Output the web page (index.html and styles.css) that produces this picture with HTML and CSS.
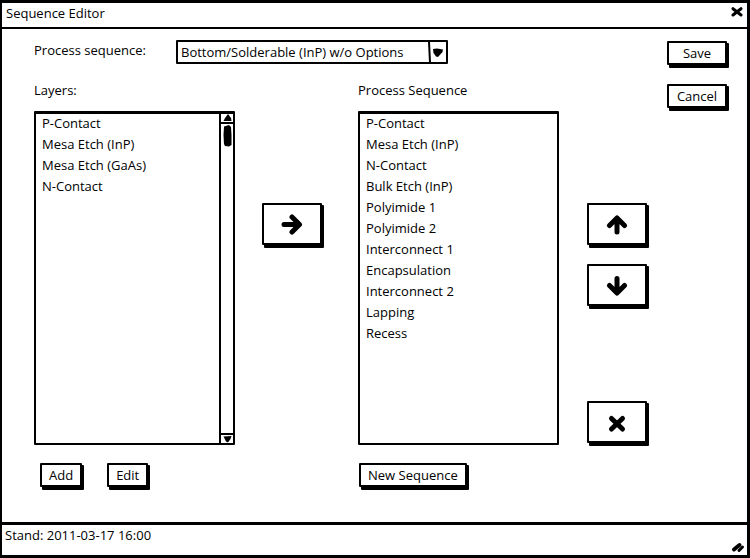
FILE: index.html
```html
<!DOCTYPE html>
<html lang="en">
<head>
<meta charset="utf-8">
<title>Sequence Editor</title>
<link rel="stylesheet" href="styles.css">
</head>
<body>
<div class="window">
  <header class="titlebar">
    <h1 class="title">Sequence Editor</h1>
    <button class="close" type="button" aria-label="Close">
      <svg width="12" height="10" viewBox="0 0 12 10"><path d="M2 1.700 10 8M10 1.700 2 8" fill="none" stroke="#000" stroke-width="3" stroke-linecap="round"/></svg>
    </button>
  </header>

  <main class="editor">
    <div class="process">
      <label class="process-label" for="process">Process sequence:</label>
      <div class="dropdown">
        <select id="process" class="dropdown-select"><option>Bottom/Solderable (InP) w/o Options</option></select>
        <svg class="dropdown-arrow" width="18" height="20" viewBox="0 0 18 20"><path d="M1 0 2 20" stroke="#000" stroke-width="2"/><path d="M5 7 9 6.500 15 7.500 14.500 10 10 15 8 14.500 5.500 11Z"/></svg>
      </div>
    </div>

    <div class="actions">
      <button class="btn" type="button">Save</button>
      <button class="btn" type="button">Cancel</button>
    </div>

    <label class="heading heading-layers" for="layers">Layers:</label>
    <label class="heading heading-sequence" for="sequence">Process Sequence</label>

    <div class="listbox list-layers">
      <select id="layers" class="list" size="4">
        <option>P-Contact</option>
        <option>Mesa Etch (InP)</option>
        <option>Mesa Etch (GaAs)</option>
        <option>N-Contact</option>
      </select>
      <div class="scroll">
        <svg class="scroll-up" width="11" height="8" viewBox="0 0 11 8"><path d="M1.500 7 3 4 6 0 9 4 9.500 7Z"/></svg>
        <svg class="scroll-thumb" width="11" height="22" viewBox="0 0 11 22"><path d="M2 1.500 7 0 9 2 9.500 10 9.500 20 7 21.500 3 21 2 19 1.500 10Z"/></svg>
        <svg class="scroll-down" width="11" height="8" viewBox="0 0 11 8"><path d="M1.500 1.500 9.500 1 8.500 4 6 7.500 4 6.500Z"/></svg>
      </div>
    </div>

    <div class="transfer">
      <button class="btn btn-icon" type="button" aria-label="Add to sequence">
        <svg width="22" height="22" viewBox="0 0 22 22"><path d="M3 11.500H18M11 4 18.500 11.500 11 19" class="stroke"/></svg>
      </button>
    </div>

    <div class="listbox list-sequence">
      <select id="sequence" class="list" size="11">
        <option>P-Contact</option>
        <option>Mesa Etch (InP)</option>
        <option>N-Contact</option>
        <option>Bulk Etch (InP)</option>
        <option>Polyimide 1</option>
        <option>Polyimide 2</option>
        <option>Interconnect 1</option>
        <option>Encapsulation</option>
        <option>Interconnect 2</option>
        <option>Lapping</option>
        <option>Recess</option>
      </select>
    </div>

    <div class="order">
      <button class="btn btn-icon" type="button" aria-label="Move up">
        <svg width="22" height="22" viewBox="0 0 22 22"><path d="M11 19V5M3.500 12.500 11 5 18.500 12.500" class="stroke"/></svg>
      </button>
      <button class="btn btn-icon" type="button" aria-label="Move down">
        <svg width="22" height="22" viewBox="0 0 22 22"><path d="M11 4.500V18.500M3.500 11.500 11 19 18.500 11.500" class="stroke"/></svg>
      </button>
      <button class="btn btn-icon btn-remove" type="button" aria-label="Remove">
        <svg width="22" height="22" viewBox="0 0 22 22"><path d="M5.500 7.500 16.500 18M16.500 7.500 5.500 18" class="stroke"/></svg>
      </button>
    </div>

    <div class="layer-tools">
      <button class="btn" type="button">Add</button>
      <button class="btn" type="button">Edit</button>
    </div>
    <div class="sequence-tools">
      <button class="btn" type="button">New Sequence</button>
    </div>
  </main>

  <footer class="status">
    <span>Stand: 2011-03-17 16:00</span>
    <svg class="grip" width="14" height="12" viewBox="0 0 14 12"><path d="M3 8.500 8.500 4" stroke="#000" stroke-width="4" stroke-linecap="round"/><path d="M8 9.500 11.500 6" stroke="#000" stroke-width="3" stroke-linecap="round"/></svg>
  </footer>
</div>
</body>
</html>
```

FILE: styles.css
```css
* {
  box-sizing: border-box;
}

body {
  margin: 0;
  background: #fff;
  color: #000;
  font: 13px/20px "Open Sans", "Noto Sans", sans-serif;
}

button,
select {
  margin: 0;
  padding: 0;
  border: 0;
  border-radius: 0;
  background: none;
  color: inherit;
  font: inherit;
}

.window {
  display: flex;
  flex-direction: column;
  min-height: 100vh;
  border: 3px solid #000;
  border-left-width: 2px;
}

.titlebar {
  display: flex;
  justify-content: space-between;
  align-items: flex-start;
  height: 26px;
  padding: 0 4px;
  border-bottom: 2px solid #000;
}

.title {
  margin: 0;
  font: inherit;
}

.close {
  display: flex;
  padding-top: 4px;
}

.editor {
  flex: 1;
  display: grid;
  grid-template-columns: 1fr 123px 1fr 108px 60px;
  grid-template-rows: 40px 42px 1fr 77px;
  padding: 0 20px 0 32px;
}

.process {
  grid-area: 1 / 1 / 2 / 5;
  display: flex;
  align-items: flex-start;
  padding-top: 11px;
}

.process-label {
  width: 142px;
}

.dropdown {
  position: relative;
  width: 272px;
}

.dropdown-select {
  display: block;
  appearance: none;
  width: 100%;
  height: 24px;
  padding: 0 20px 0 3px;
  border: 2px solid #000;
  border-radius: 1px;
}

.dropdown-arrow {
  position: absolute;
  top: 2px;
  right: 2px;
  pointer-events: none;
}

.actions {
  grid-area: 1 / 5 / 4 / 6;
  display: flex;
  flex-direction: column;
  gap: 19px;
  padding-top: 12px;
}

.btn {
  height: 24px;
  padding: 0 7px;
  border: 2px solid #000;
  border-radius: 1px;
  background: #fff;
  box-shadow: 2px 2px 0 #000, 2px 3px 0 #000;
}

.heading {
  padding-top: 11px;
}

.heading-layers {
  grid-area: 2 / 1;
}

.heading-sequence {
  grid-area: 2 / 3;
}

.listbox {
  display: flex;
  border: 2px solid #000;
  border-top-width: 3px;
  border-radius: 1px;
}

.list-layers {
  grid-area: 3 / 1;
}

.list-sequence {
  grid-area: 3 / 3;
}

.list {
  flex: 1;
  min-width: 0;
  overflow: hidden;
  outline: 0;
}

.list option {
  min-height: 21px;
  padding: 0 6px;
  line-height: 21px;
}

.scroll {
  display: flex;
  flex-direction: column;
  align-items: center;
  width: 14px;
  border-left: 2px solid #000;
}

.scroll-up,
.scroll-down {
  box-sizing: content-box;
  padding: 0 1px;
}

.scroll-up {
  border-bottom: 2px solid #000;
}

.scroll-thumb {
  margin-top: 1px;
}

.scroll-down {
  margin-top: auto;
  border-top: 2px solid #000;
}

.transfer {
  grid-area: 3 / 2;
  padding: 92px 0 0 27px;
}

.btn-icon {
  display: flex;
  align-items: center;
  justify-content: center;
  width: 60px;
  height: 42px;
}

.stroke {
  fill: none;
  stroke: #000;
  stroke-width: 5;
  stroke-linecap: round;
  stroke-linejoin: round;
}

.order {
  grid-area: 3 / 4;
  display: flex;
  flex-direction: column;
  gap: 19px;
  padding: 92px 0 2px 28px;
}

.btn-remove {
  margin-top: auto;
}

.layer-tools,
.sequence-tools {
  display: flex;
  align-items: flex-start;
  padding-top: 18px;
}

.layer-tools {
  grid-area: 4 / 1;
  gap: 25px;
  padding-left: 6px;
}

.sequence-tools {
  grid-area: 4 / 3;
  padding-left: 1px;
}

.status {
  display: flex;
  justify-content: space-between;
  height: 33px;
  padding-left: 3px;
  border-top: 3px solid #000;
}

.grip {
  align-self: flex-end;
  margin: 0 2px 2px 0;
}
```
